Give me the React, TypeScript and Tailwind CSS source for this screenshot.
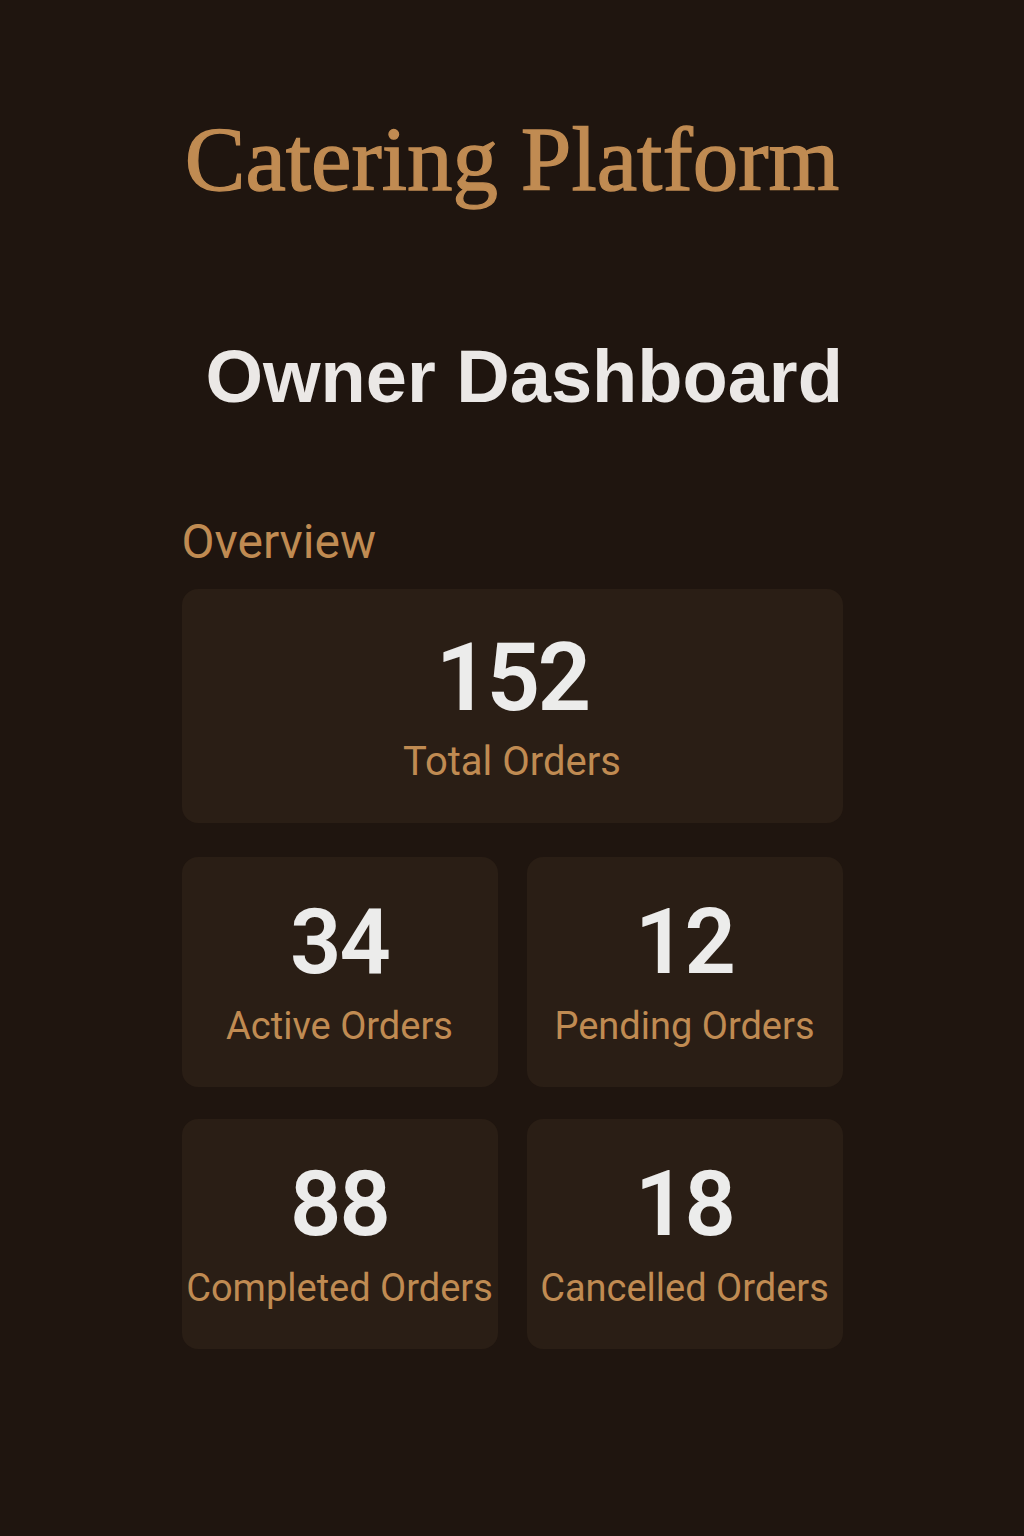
import React from "react";

const stats = [
  { value: "34", label: "Active Orders" },
  { value: "12", label: "Pending Orders" },
  { value: "88", label: "Completed Orders" },
  { value: "18", label: "Cancelled Orders" },
];

export default function App() {
  return (
    <div className="min-h-[1536px] w-full bg-[#1f150f] font-['Roboto',sans-serif]">
      <div className="mx-auto flex w-[661px] flex-col pt-[110px]">
        <h1 className="text-center font-['Liberation_Serif',serif] text-[91px] leading-[100px] text-[#c08b52] [-webkit-text-stroke:1.3px_#c08b52]">
          Catering Platform
        </h1>
        <h2 className="mt-[122px] whitespace-nowrap pl-[24px] text-center font-['Liberation_Sans',sans-serif] text-[74px] font-bold leading-[90px] text-[#ebe8e6]">
          Owner Dashboard
        </h2>
        <h3 className="mt-[92px] text-[48px] leading-[56px] text-[#c08b52]">Overview</h3>

        <div className="mt-[19px] flex h-[234px] flex-col items-center justify-center rounded-[16px] bg-[#2a1e15]">
          <div className="mt-[2px] text-[94px] font-semibold leading-[100px] tracking-[-0.03em] text-[#ececeb]">152</div>
          <div className="mt-[10px] text-[40px] leading-[48px] text-[#c08b52]">Total Orders</div>
        </div>

        <div className="mt-[34px] grid grid-cols-2 gap-x-[29px] gap-y-[32px]">
          {stats.map((s) => (
            <div
              key={s.label}
              className="flex h-[230px] flex-col items-center justify-center rounded-[16px] bg-[#2a1e15]"
            >
              <div className="text-[90px] font-semibold leading-[96px] tracking-[-0.02em] text-[#ececeb]">
                {s.value}
              </div>
              <div className="mt-[12px] text-[38px] leading-[46px] text-[#c08b52]">{s.label}</div>
            </div>
          ))}
        </div>
      </div>
    </div>
  );
}
